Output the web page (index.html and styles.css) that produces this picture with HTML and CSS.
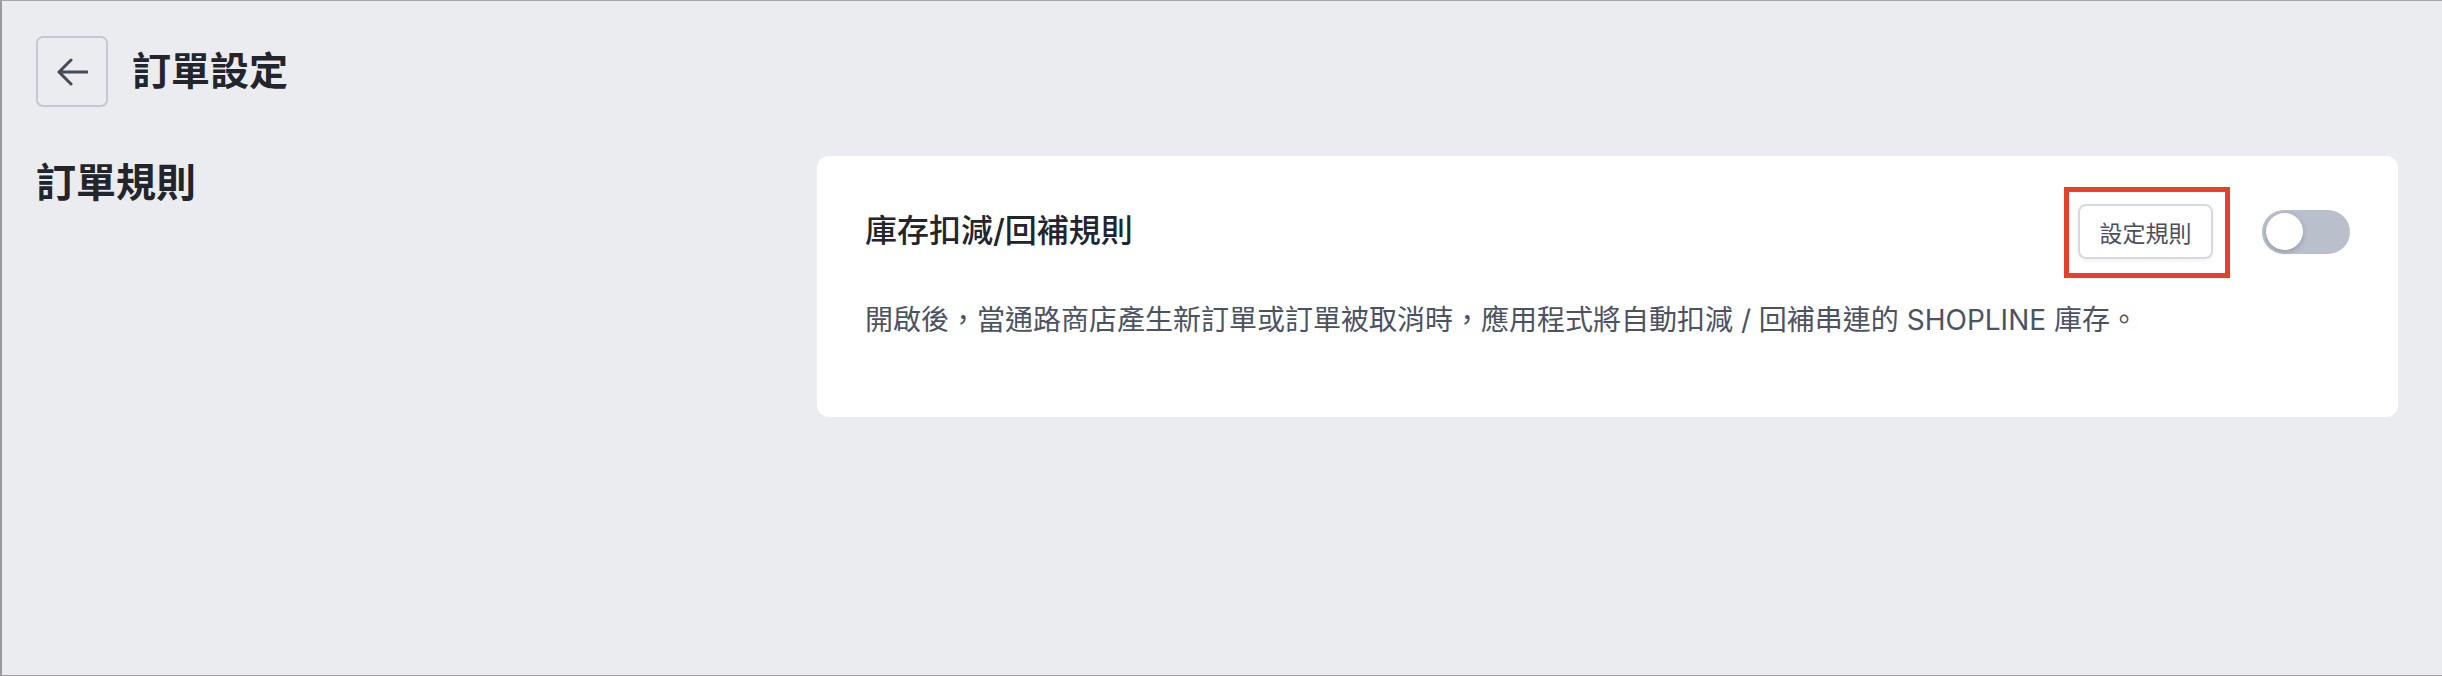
FILE: index.html
```html
<!DOCTYPE html>
<html lang="zh-Hant">
	<head>
		<meta charset="utf-8">
		<title>訂單設定</title>
		<link rel="stylesheet" href="styles.css">
	</head>
	<body>
		<div class="page">
			<div class="page-header">
				<button class="btn-back" type="button">
					<svg width="32" height="28" viewBox="0 0 32 28">
						<path d="M3 14 H31 M15 2 L3 14 L15 26" fill="none" stroke="#454a57" stroke-width="3" stroke-linecap="round" stroke-linejoin="round"/>
					</svg>
				</button>
				<h1 class="page-title">訂單設定</h1>
			</div>

			<div class="section">
				<h2 class="section-title">訂單規則</h2>
				<div class="card">
					<div class="card-head">
						<h3 class="card-title">庫存扣減/回補規則</h3>
						<div class="card-actions">
							<span class="mark">
								<button class="btn-rule" type="button">設定規則</button>
							</span>
							<span class="switch">
								<span class="switch-knob"></span>
							</span>
						</div>
					</div>
					<p class="card-desc">開啟後，當通路商店產生新訂單或訂單被取消時，應用程式將自動扣減 / 回補串連的 SHOPLINE 庫存。</p>
				</div>
			</div>
		</div>
	</body>
</html>
```

FILE: styles.css
```css
* {
	margin: 0;
	padding: 0;
	box-sizing: border-box;
}

html,
body {
	height: 100%;
}

body {
	background: #ebecf0;
	font-family: Inter, "Noto Sans CJK TC", sans-serif;
	color: #23252d;
	border-left: 2px solid #9b9b9f;
	border-top: 1px solid #a5a5a9;
	border-bottom: 1px solid #9b9b9f;
	overflow: hidden;
}

.page {
	padding: 35px 44px 0 34px;
}

.page-header {
	display: flex;
	align-items: center;
	gap: 24px;
}

.btn-back {
	width: 72px;
	height: 71px;
	border: 2px solid #c3c8d3;
	border-radius: 7px;
	background: transparent;
	display: flex;
	align-items: center;
	justify-content: center;
}

.page-title {
	font-size: 39px;
	font-weight: 700;
	line-height: 1.4;
}

.section {
	display: grid;
	grid-template-columns: 781px 1fr;
	align-items: start;
	margin-top: 49px;
}

.section-title {
	font-size: 40px;
	font-weight: 700;
	line-height: 1.3;
	margin-top: 1px;
}

.card {
	background: #fff;
	border-radius: 12px;
	padding: 48px 48px 76px 48px;
}

.card-head {
	display: flex;
	align-items: center;
	justify-content: space-between;
}

.card-title {
	font-size: 32px;
	font-weight: 500;
	line-height: 1.4;
	color: #23252d;
}

.card-actions {
	display: flex;
	align-items: center;
	gap: 49px;
}

.mark {
	position: relative;
	display: block;
}

.mark::after {
	content: "";
	position: absolute;
	left: -14px;
	right: -17px;
	top: -17px;
	bottom: -19px;
	border: 5px solid #e5402a;
}

.btn-rule {
	display: block;
	width: 135px;
	height: 55px;
	border: 2px solid #d6d9e4;
	border-radius: 8px;
	background: #fff;
	box-shadow: 0 3px 4px rgba(30, 40, 80, 0.05);
	font-family: Inter, "Noto Sans CJK TC", sans-serif;
	font-size: 23px;
	color: #4a4f5c;
}

.switch {
	position: relative;
	display: block;
	width: 88px;
	height: 44px;
	border-radius: 22px;
	background: #b9bfcb;
}

.switch-knob {
	position: absolute;
	left: 4px;
	top: 3px;
	width: 37px;
	height: 37px;
	border-radius: 50%;
	background: #fff;
	box-shadow: 0 2px 5px rgba(40, 45, 60, 0.25);
}

.card-desc {
	margin-top: 40px;
	font-size: 28px;
	line-height: 1.5;
	color: #4d5262;
}
```
